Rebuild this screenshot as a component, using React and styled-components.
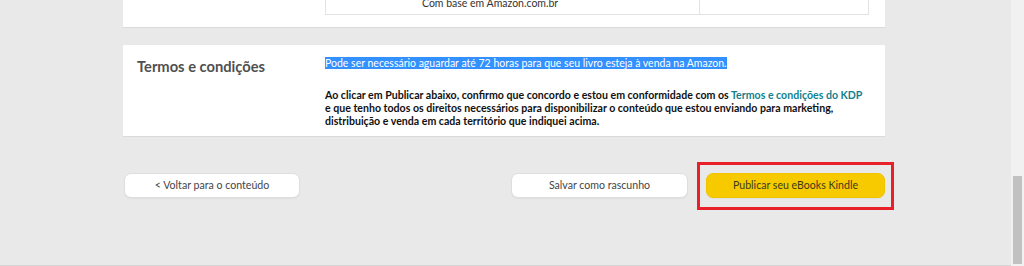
import React from 'react'
import styled, { createGlobalStyle } from 'styled-components'

const GlobalStyle = createGlobalStyle`
  html, body {
    margin: 0;
    padding: 0;
    background: #e9e9e9;
  }
  body {
    font-family: Lato, "Noto Sans", Arial, sans-serif;
    color: #111;
  }
`

const Page = styled.div`
  display: flex;
  height: 266px;
  overflow: hidden;
`

const Main = styled.main`
  flex: 1;
  background: #e9e9e9;
  border-bottom: 1px solid #d6d6d6;
  padding-left: 123px;
  box-sizing: border-box;
`

const Column = styled.div`
  width: 762px;
  display: flex;
  flex-direction: column;
`

const TopCard = styled.section`
  height: 27px;
  background: #fff;
  box-shadow: 0 1px 0 #dadada;
  padding-left: 202px;
  padding-right: 16px;
`

const Table = styled.div`
  display: grid;
  grid-template-columns: 373px 1fr;
  height: 15px;
  border: 1px solid #e3e3e3;
  border-top: none;
  box-sizing: border-box;
  overflow: hidden;
`

const Cell = styled.div`
  font-size: 10.5px;
  line-height: 12px;
  color: #333;
  margin-top: -3px;
  padding-left: ${p => p.$indent || 0}px;
  & + & {
    border-left: 1px solid #e3e3e3;
  }
`

const TermsCard = styled.section`
  margin-top: 18px;
  background: #fff;
  box-shadow: 0 1px 0 #dadada;
  display: grid;
  grid-template-columns: 202px 1fr;
  padding: 11px 16px 10px 0;
  box-sizing: border-box;
  height: 91px;
`

const Title = styled.h2`
  margin: 0;
  padding-left: 14px;
  font-size: 14.7px;
  line-height: 20px;
  font-weight: 700;
  color: #505050;
`

const Body = styled.div`
  display: flex;
  flex-direction: column;
  gap: 20px;
`

const Note = styled.p`
  margin: 0;
  padding-top: 1px;
  font-size: 10.5px;
  line-height: 12px;
  span {
    background: #3390ff;
    color: #fff;
  }
`

const Legal = styled.p`
  margin: 0;
  font-size: 10.6px;
  line-height: 13px;
  font-weight: 700;
  color: #111;
  white-space: nowrap;
`

const Link = styled.a`
  color: #137f8f;
  text-decoration: none;
`

const Actions = styled.div`
  margin-top: 37px;
  display: flex;
  justify-content: space-between;
  align-items: center;
  padding-left: 1px;
`

const RightActions = styled.div`
  display: flex;
  align-items: center;
  gap: 18px;
`

const Button = styled.button`
  height: 25px;
  width: ${p => p.$width}px;
  border-radius: 7px;
  border: 1px solid ${p => (p.$primary ? '#f2c400' : '#dedede')};
  background: ${p => (p.$primary ? '#f7ca00' : '#fff')};
  color: ${p => (p.$primary ? '#3a3a1a' : '#444')};
  font-family: inherit;
  font-size: 10.6px;
  line-height: 1;
  padding: 0;
  cursor: pointer;
  box-shadow: 0 1px 1px rgba(0, 0, 0, 0.04);
`

const Marked = styled.div`
  position: relative;
  display: flex;
  &::after {
    content: '';
    position: absolute;
    top: -11px;
    bottom: -12px;
    left: -9px;
    right: -9px;
    border: 3px solid #e8202a;
    pointer-events: none;
  }
`

const Scrollbar = styled.div`
  width: 13px;
  background: #f1f1f1;
  display: flex;
  flex-direction: column;
  align-items: center;
  padding-top: 176px;
  padding-bottom: 2px;
  box-sizing: border-box;
`

const Thumb = styled.div`
  width: 9px;
  flex: 1;
  background: #c1c1c1;
`

export default function App() {
  return (
    <>
      <GlobalStyle />
      <Page>
        <Main>
          <Column>
            <TopCard>
              <Table>
                <Cell $indent={96}>Com base em Amazon.com.br</Cell>
                <Cell />
              </Table>
            </TopCard>

            <TermsCard>
              <Title>Termos e condições</Title>
              <Body>
                <Note>
                  <span>Pode ser necessário aguardar até 72 horas para que seu livro esteja à venda na Amazon.</span>
                </Note>
                <Legal>
                  Ao clicar em Publicar abaixo, confirmo que concordo e estou em conformidade com os{' '}
                  <Link href="#">Termos e condições do KDP</Link>
                  <br />
                  e que tenho todos os direitos necessários para disponibilizar o conteúdo que estou enviando para marketing,
                  <br />
                  distribuição e venda em cada território que indiquei acima.
                </Legal>
              </Body>
            </TermsCard>

            <Actions>
              <Button $width={176}>&lt; Voltar para o conteúdo</Button>
              <RightActions>
                <Button $width={177}>Salvar como rascunho</Button>
                <Marked>
                  <Button $primary $width={179}>Publicar seu eBooks Kindle</Button>
                </Marked>
              </RightActions>
            </Actions>
          </Column>
        </Main>
        <Scrollbar>
          <Thumb />
        </Scrollbar>
      </Page>
    </>
  )
}
